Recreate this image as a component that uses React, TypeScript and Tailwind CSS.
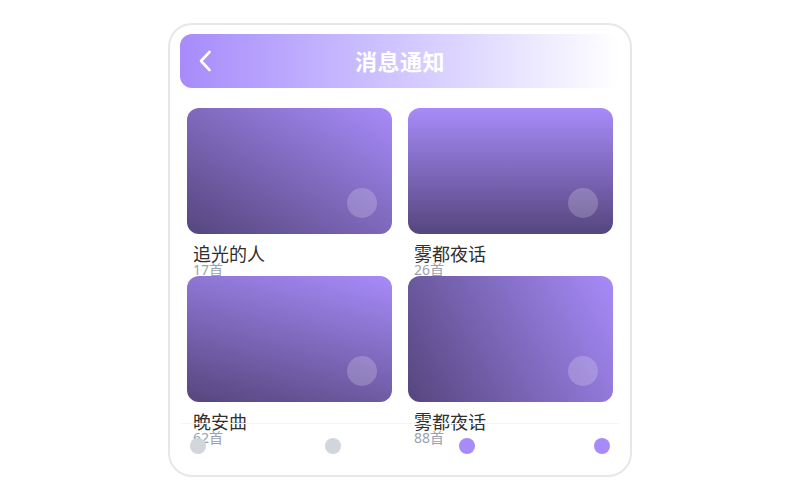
import React from 'react';

interface Album {
    title: string;
    count: number;
    gradient: string;
}

const albums: Album[] = [
    { title: '追光的人', count: 17, gradient: 'bg-[linear-gradient(210deg,#a78bfa,#55467d)]' },
    { title: '雾都夜话', count: 26, gradient: 'bg-[linear-gradient(180deg,#a78bfa,#55467d)]' },
    { title: '晚安曲', count: 62, gradient: 'bg-[linear-gradient(195deg,#a78bfa,#55467d)]' },
    { title: '雾都夜话', count: 88, gradient: 'bg-[linear-gradient(240deg,#a78bfa,#55467d)]' },
];

const AlbumCell: React.FC<{ album: Album }> = ({ album }) => (
    <div className="h-[168px]">
        <div className={`relative h-[126px] rounded-[12px] ${album.gradient}`}>
            <div className="absolute right-[15px] bottom-[16px] w-[30px] h-[30px] rounded-full bg-white/20" />
        </div>
        <div className="pt-[11px] px-[6px]">
            <div className="text-[18px] leading-none text-[#2f2f2f]">{album.title}</div>
            <div className="text-sm leading-none text-gray-400">{album.count}首</div>
        </div>
    </div>
);

const App: React.FC = () => {
    const dots = ['bg-gray-300', 'bg-gray-300', 'bg-[#a78bfa]', 'bg-[#a78bfa]'];
    return (
        <div className="w-[800px] h-[500px] bg-white flex items-center justify-center font-['Noto_Sans','Noto_Sans_CJK_SC',sans-serif]">
            <div className="w-[464px] h-[454px] border-2 border-gray-200 rounded-[24px] pt-[9px] px-[10px] pb-[10px] flex flex-col">
                <div className="h-[54px] rounded-[12px] bg-gradient-to-r from-[#a78bfa] to-white flex items-center relative">
                    <div className="absolute left-[18px] top-0 h-full flex items-center">
                        <svg width="14" height="22" viewBox="0 0 14 22" fill="none" stroke="white" strokeWidth="2.6" strokeLinecap="round" strokeLinejoin="round">
                            <path d="M11.5 2 L3 11 L11.5 20" />
                        </svg>
                    </div>
                    <h1 className="flex-1 text-center text-[22px] font-bold text-white tracking-[0.5px]">消息通知</h1>
                </div>

                <div className="flex-1 min-h-0 px-[7px] pt-[20px]">
                    <div className="grid grid-cols-2 gap-x-[16px]">
                        {albums.map((a, i) => (
                            <AlbumCell key={i} album={a} />
                        ))}
                    </div>
                </div>

                <div className="relative border-t border-gray-100 mx-[1px] pt-[14px] pb-[11px] px-[9px] flex justify-between">
                    {dots.map((c, i) => (
                        <div key={i} className={`w-4 h-4 rounded-full ${c}`} />
                    ))}
                </div>
            </div>
        </div>
    );
};

export default App;
